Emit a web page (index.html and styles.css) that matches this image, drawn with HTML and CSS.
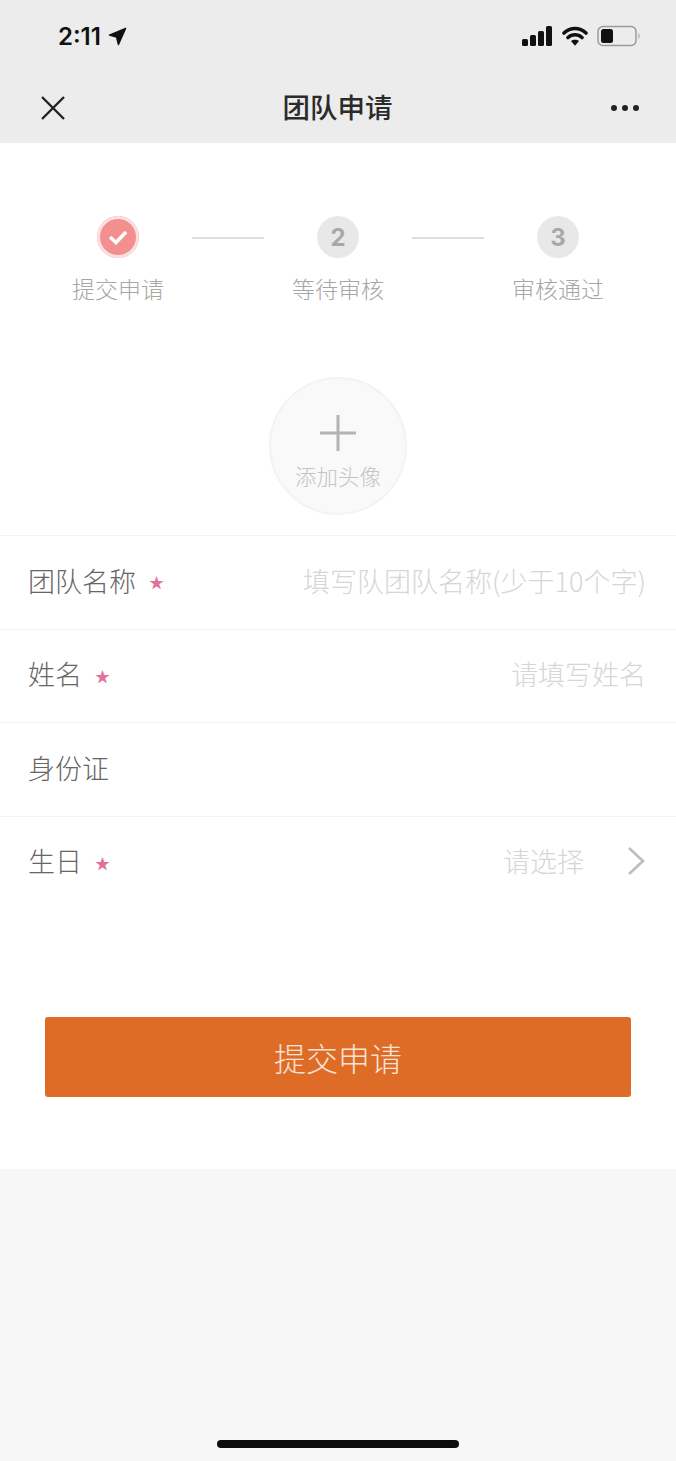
FILE: index.html
```html
<!DOCTYPE html>
<html lang="zh-CN">
<head>
  <meta charset="UTF-8">
  <meta name="viewport" content="width=device-width, initial-scale=1.0">
  <title>团队申请</title>
  <link rel="stylesheet" href="styles.css">
</head>
<body>
  <div class="phone">
    <header class="top">
      <div class="status">
        <div class="time">2:11
          <svg class="arrow" width="19" height="19" viewBox="0 0 20 20"><path d="M18.500 1.500 1.500 8.500 9 10.500 11 18.500z" fill="#111" stroke="#111" stroke-width="1.500" stroke-linejoin="round"/></svg>
        </div>
        <div class="status-icons">
          <svg width="31" height="20" viewBox="0 0 31 20"><rect x="0" y="13" width="6" height="7" rx="1.500" fill="#111"/><rect x="8" y="9" width="6" height="11" rx="1.500" fill="#111"/><rect x="16" y="5" width="6" height="15" rx="1.500" fill="#111"/><rect x="24" y="0" width="6" height="20" rx="1.500" fill="#111"/></svg>
          <svg width="26" height="20" viewBox="0 0 26 20"><path d="M2 7c6.500-6 15.500-6 22 0M6 11.500c4-3.600 10-3.600 14 0" fill="none" stroke="#111" stroke-width="3.600" stroke-linecap="round"/><path d="M9 15c2-1.800 6-1.800 8 0l-4 4.800z" fill="#111"/></svg>
          <svg class="battery" width="44" height="22" viewBox="0 0 44 22"><rect x="1" y="1.500" width="38" height="19" rx="5" fill="none" stroke="#9a9a9a" stroke-width="1.500"/><rect x="4" y="4" width="12" height="14" rx="2.500" fill="#111"/><path d="M41.500 8c1.300.5 1.300 5.500 0 6z" fill="#9a9a9a"/></svg>
        </div>
      </div>
      <nav class="nav">
        <svg width="26" height="26" viewBox="0 0 26 26"><path d="M2 2l22 22M24 2 2 24" stroke="#222" stroke-width="2.400" fill="none"/></svg>
        <h1>团队申请</h1>
        <div class="dots"><i></i><i></i><i></i></div>
      </nav>
    </header>

    <main class="sheet">
      <div class="steps">
        <div class="step">
          <div class="circle done">
            <svg width="22" height="18" viewBox="0 0 22 18"><path d="M3 9l6 5.500L19 4" fill="none" stroke="#fff" stroke-width="3.600"/></svg>
          </div>
          <span>提交申请</span>
        </div>
        <div class="link"></div>
        <div class="step">
          <div class="circle">2</div>
          <span>等待审核</span>
        </div>
        <div class="link"></div>
        <div class="step">
          <div class="circle">3</div>
          <span>审核通过</span>
        </div>
      </div>

      <div class="avatar">
        <svg width="36" height="36" viewBox="0 0 36 36"><path d="M18 0v36M0 18h36" stroke="#b4b4b4" stroke-width="3" fill="none"/></svg>
        <span>添加头像</span>
      </div>

      <div class="form">
        <div class="row">
          <label class="label">团队名称<em>★</em></label>
          <span class="hint">填写队团队名称(少于10个字)</span>
        </div>
        <div class="row">
          <label class="label">姓名<em>★</em></label>
          <span class="hint">请填写姓名</span>
        </div>
        <div class="row">
          <label class="label">身份证</label>
        </div>
        <div class="row">
          <label class="label">生日<em>★</em></label>
          <span class="hint">请选择</span>
          <svg class="chevron" width="19" height="30" viewBox="0 0 19 30"><path d="M2 2l14 13L2 28" fill="none" stroke="#bdbdbd" stroke-width="2.600"/></svg>
        </div>
      </div>

      <button class="submit">提交申请</button>
    </main>

    <div class="home-bar"></div>
  </div>
</body>
</html>
```

FILE: styles.css
```css
* {
  box-sizing: border-box;
}
body {
  margin: 0;
  background-color: #f7f7f7;
  font-family: "Noto Sans CJK SC", "Liberation Sans", sans-serif;
}
.phone {
  height: 1461px;
  display: flex;
  flex-direction: column;
  overflow: hidden;
}
.top {
  height: 143px;
  background-color: #ececec;
}
.status {
  height: 72px;
  padding: 0 35px 0 58px;
  display: flex;
  align-items: center;
  justify-content: space-between;
}
.time {
  display: flex;
  align-items: center;
  gap: 7px;
  font-family: Inter, "Liberation Sans", sans-serif;
  font-size: 24px;
  font-weight: 600;
  color: #111;
}
.status-icons {
  display: flex;
  align-items: center;
  gap: 9px;
}
.nav {
  height: 71px;
  padding: 0 37px 0 40px;
  display: flex;
  align-items: center;
  justify-content: space-between;
}
.nav h1 {
  margin: -3px 0 0 -2px;
  font-size: 27.500px;
  font-weight: 500;
  color: #2b2b2b;
}
.dots {
  display: flex;
  gap: 5px;
}
.dots i {
  width: 6px;
  height: 6px;
  border-radius: 50%;
  background-color: #222;
}
.sheet {
  height: 1026px;
  background-color: #fff;
}
.steps {
  padding-top: 73px;
  display: flex;
  justify-content: center;
  align-items: flex-start;
}
.step {
  width: 92px;
  display: flex;
  flex-direction: column;
  align-items: center;
  gap: 13px;
}
.step span {
  font-size: 23px;
  font-weight: 300;
  line-height: 34px;
  color: #a6a6a6;
  white-space: nowrap;
}
.circle {
  width: 42px;
  height: 42px;
  border-radius: 50%;
  background-color: #e8e8e8;
  display: flex;
  align-items: center;
  justify-content: center;
  font-family: Inter, "Liberation Sans", sans-serif;
  font-size: 24px;
  font-weight: 700;
  color: #a8a8a8;
}
.circle.done {
  background-color: #f38f8f;
  box-shadow: inset 0 0 0 3px #fbe0e0;
}
.link {
  width: 72px;
  height: 2px;
  margin: 21px 28px 0;
  background-color: #dedede;
}
.avatar {
  width: 138px;
  height: 138px;
  margin: 72px auto 0;
  padding-top: 36px;
  border: 2px solid #f3f3f3;
  border-radius: 50%;
  background-color: #f9f9f9;
  display: flex;
  flex-direction: column;
  align-items: center;
}
.avatar span {
  margin-top: 9px;
  font-size: 21.500px;
  font-weight: 300;
  line-height: 32px;
  color: #c4c4c4;
  white-space: nowrap;
}
.form {
  margin-top: 20px;
}
.row {
  height: 93.500px;
  padding: 0 30px 4px 28px;
  border-top: 1px solid #f3f3f3;
  display: flex;
  align-items: center;
}
.label {
  display: flex;
  align-items: center;
  font-size: 27px;
  font-weight: 300;
  color: #666;
}
.label em {
  margin: 3px 0 0 13px;
  font-family: "DejaVu Sans", sans-serif;
  font-size: 15px;
  font-style: normal;
  color: #e0709c;
}
.hint {
  margin-left: auto;
  font-size: 27px;
  font-weight: 300;
  color: #d6d6d6;
  white-space: nowrap;
}
.chevron {
  margin-left: 43px;
}
.submit {
  display: block;
  width: 586px;
  height: 80px;
  margin: 108px auto 0;
  border: none;
  border-radius: 3px;
  background-color: #de6c26;
  color: #f6e3d6;
  font-family: inherit;
  font-size: 32px;
  font-weight: 300;
}
.home-bar {
  width: 242px;
  height: 8px;
  margin: 271px auto 0;
  border-radius: 4px;
  background-color: #0c0c0c;
}
```
